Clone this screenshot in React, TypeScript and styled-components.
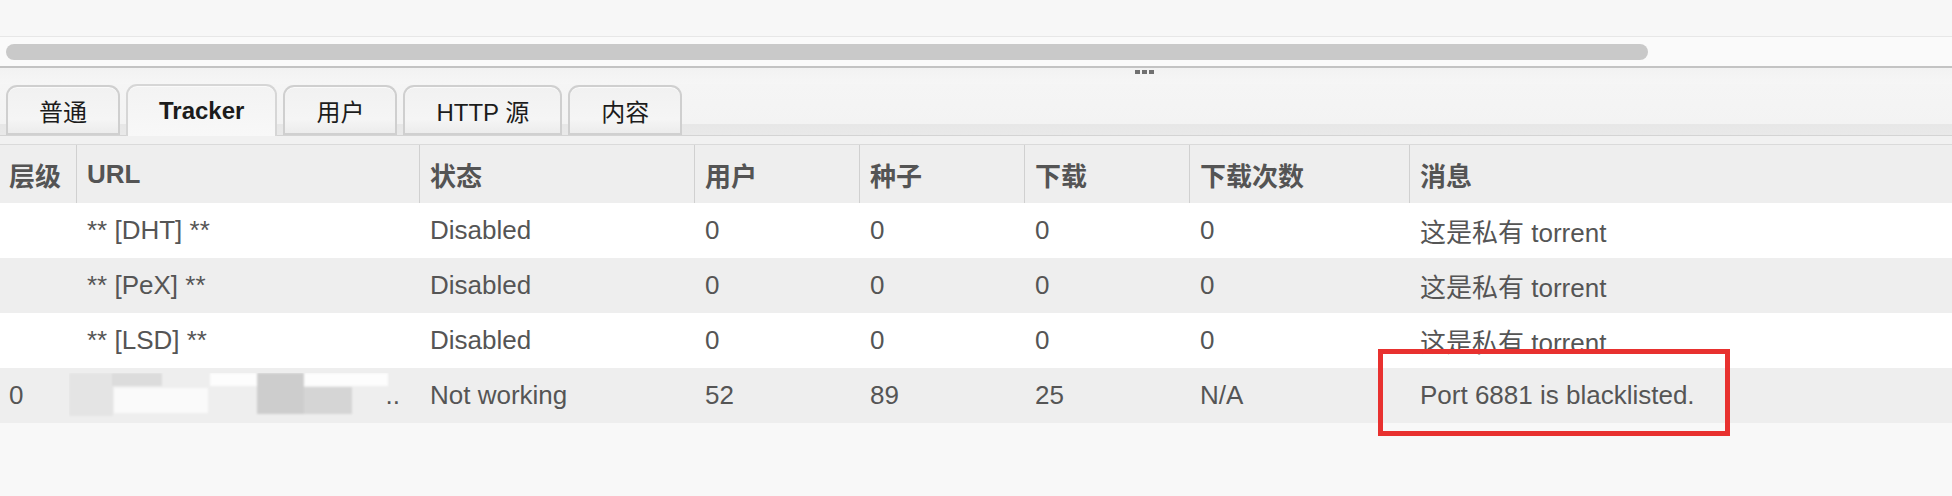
import React from "react";
import styled, { createGlobalStyle } from "styled-components";

const Global = createGlobalStyle`
  html, body {
    margin: 0;
    padding: 0;
    background: #f8f8f8;
  }
  body {
    font-family: "Liberation Sans", Arial, "Noto Sans CJK SC", sans-serif;
    overflow: hidden;
  }
`;

const Page = styled.div`
  width: 1952px;
  height: 496px;
  display: flex;
  flex-direction: column;
  background: #f8f8f8;
`;

const TopPane = styled.div`
  height: 36px;
  background: #f7f7f7;
  border-bottom: 1px solid #e7e7e7;
`;

const ScrollTrack = styled.div`
  height: 29px;
  background: #fafafa;
  padding: 7px 0 0 6px;
  box-sizing: border-box;
`;

const ScrollThumb = styled.div`
  width: 1642px;
  height: 16px;
  border-radius: 8px;
  background: #c9c9c9;
`;

const Splitter = styled.div`
  height: 18px;
  border-top: 2px solid #c3c3c3;
  background: linear-gradient(to bottom, #f2f2f2 0, #f6f6f6 100%);
  display: flex;
  padding-left: 1135px;
  padding-top: 2px;
  box-sizing: border-box;
`;

const Grip = styled.div`
  display: flex;
  gap: 2px;
  height: 4px;
`;

const GripDot = styled.span`
  width: 5px;
  height: 4px;
  background: #707070;
`;

const TabBar = styled.div`
  height: 51px;
  display: flex;
  align-items: flex-end;
  gap: 6px;
  padding-left: 6px;
  background: linear-gradient(
    to bottom,
    #f5f5f5 0,
    #f3f3f3 40px,
    #e7e7e7 40px,
    #e9e9e9 51px
  );
  border-bottom: 1px solid #d4d4d4;
`;

const Tab = styled.div<{ $active?: boolean }>`
  height: ${(p) => (p.$active ? "52px" : "50px")};
  margin-bottom: ${(p) => (p.$active ? "-1px" : "0")};
  box-sizing: border-box;
  padding: 0 ${(p) => (p.$active ? "31px" : "31px")};
  display: flex;
  align-items: center;
  justify-content: center;
  border: 2px solid ${(p) => (p.$active ? "#d6d6d6" : "#cfcfcf")};
  border-bottom: ${(p) => (p.$active ? "none" : "2px solid #d0d0d0")};
  border-radius: 11px 11px 0 0;
  background: ${(p) =>
    p.$active
      ? "linear-gradient(to bottom, #f3f3f3, #f8f8f8)"
      : "linear-gradient(to bottom, #f1f1f1, #f5f5f5 70%, #ececec)"};
  font-size: 24px;
  font-weight: ${(p) => (p.$active ? 700 : 400)};
  color: #1c1c1c;
  box-shadow: inset 0 1px 0 #fafafa;
`;

const UnderTabs = styled.div`
  height: 8px;
  background: #f1f1f1;
  border-bottom: 1px solid #dadada;
`;

const cols = "76px 343px 275px 165px 165px 165px 220px 1fr";

const HeaderRow = styled.div`
  display: grid;
  grid-template-columns: ${cols};
  height: 58px;
  background: #eeeeee;
`;

const HeadCell = styled.div<{ $first?: boolean }>`
  display: flex;
  align-items: center;
  padding-left: ${(p) => (p.$first ? "9px" : "10px")};
  border-left: ${(p) => (p.$first ? "none" : "1px solid #d0d0d0")};
  font-size: 26px;
  font-weight: 700;
  color: #545454;
  white-space: nowrap;
  overflow: hidden;
`;

const Row = styled.div<{ $alt?: boolean }>`
  display: grid;
  grid-template-columns: ${cols};
  height: 55px;
  background: ${(p) => (p.$alt ? "#eeeeee" : "#ffffff")};
`;

const Cell = styled.div<{ $first?: boolean }>`
  position: relative;
  display: flex;
  align-items: center;
  padding-left: ${(p) => (p.$first ? "9px" : "11px")};
  font-size: 26px;
  color: #555555;
  white-space: nowrap;
`;

const UrlCell = styled(Cell)`
  justify-content: flex-end;
  padding-right: 19px;
`;

const Redaction = styled.svg`
  position: absolute;
  left: -7px;
  top: 5px;
`;

const Highlight = styled.div`
  position: absolute;
  left: -31px;
  top: -19px;
  width: 352px;
  height: 87px;
  box-sizing: border-box;
  border: 5px solid #e8312f;
  pointer-events: none;
`;

const MessageCell = styled(Cell)`
  overflow: visible;
`;

type R = {
  tier: string;
  url: string;
  status: string;
  peers: string;
  seeds: string;
  leeches: string;
  downloaded: string;
  msg: string;
};

const rows: R[] = [
  { tier: "", url: "** [DHT] **", status: "Disabled", peers: "0", seeds: "0", leeches: "0", downloaded: "0", msg: "这是私有 torrent" },
  { tier: "", url: "** [PeX] **", status: "Disabled", peers: "0", seeds: "0", leeches: "0", downloaded: "0", msg: "这是私有 torrent" },
  { tier: "", url: "** [LSD] **", status: "Disabled", peers: "0", seeds: "0", leeches: "0", downloaded: "0", msg: "这是私有 torrent" },
];

const headers = ["层级", "URL", "状态", "用户", "种子", "下载", "下载次数", "消息"];

function RedactedUrl() {
  return (
    <Redaction width="320" height="45" viewBox="0 0 320 45">
      <defs>
        <filter id="soft" x="-10%" y="-10%" width="120%" height="120%">
          <feGaussianBlur stdDeviation="1.2" />
        </filter>
      </defs>
      <g filter="url(#soft)">
        <rect x="0" y="0" width="44" height="43" fill="#e4e4e4" />
        <rect x="43" y="0" width="50" height="13" fill="#dcdcdc" />
        <rect x="45" y="15" width="94" height="25" fill="#fafafa" />
        <rect x="141" y="0" width="178" height="13" fill="#fdfdfd" />
        <rect x="188" y="0" width="47" height="41" fill="#cdcdcd" />
        <rect x="235" y="14" width="48" height="27" fill="#d5d5d5" />
      </g>
    </Redaction>
  );
}

export default function App() {
  return (
    <Page>
      <Global />
      <TopPane />
      <ScrollTrack>
        <ScrollThumb />
      </ScrollTrack>
      <Splitter>
        <Grip>
          <GripDot />
          <GripDot />
          <GripDot />
        </Grip>
      </Splitter>
      <TabBar>
        <Tab>普通</Tab>
        <Tab $active>Tracker</Tab>
        <Tab>用户</Tab>
        <Tab>HTTP 源</Tab>
        <Tab>内容</Tab>
      </TabBar>
      <UnderTabs />
      <HeaderRow>
        {headers.map((h, i) => (
          <HeadCell key={h} $first={i === 0}>
            {h}
          </HeadCell>
        ))}
      </HeaderRow>
      {rows.map((r, i) => (
        <Row key={r.url} $alt={i % 2 === 1}>
          <Cell $first>{r.tier}</Cell>
          <Cell>{r.url}</Cell>
          <Cell>{r.status}</Cell>
          <Cell>{r.peers}</Cell>
          <Cell>{r.seeds}</Cell>
          <Cell>{r.leeches}</Cell>
          <Cell>{r.downloaded}</Cell>
          <Cell>{r.msg}</Cell>
        </Row>
      ))}
      <Row $alt>
        <Cell $first>0</Cell>
        <UrlCell>
          <RedactedUrl />
          ..
        </UrlCell>
        <Cell>Not working</Cell>
        <Cell>52</Cell>
        <Cell>89</Cell>
        <Cell>25</Cell>
        <Cell>N/A</Cell>
        <MessageCell>
          Port 6881 is blacklisted.
          <Highlight />
        </MessageCell>
      </Row>
    </Page>
  );
}
